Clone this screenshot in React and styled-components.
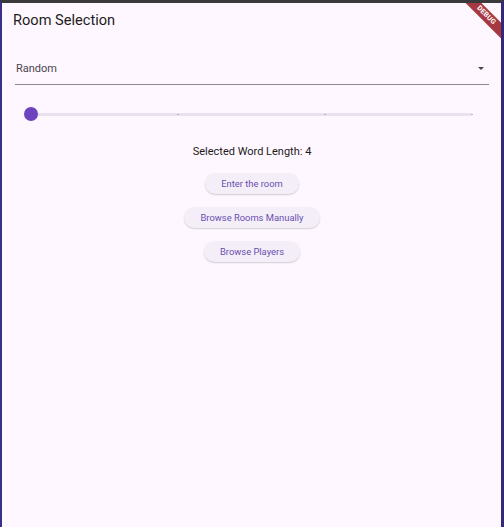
import styled, { createGlobalStyle } from "styled-components";

const GlobalStyle = createGlobalStyle`
  html, body {
    margin: 0;
    padding: 0;
    background: #fef7ff;
  }
  * { box-sizing: border-box; }
`;

const Frame = styled.div`
  position: relative;
  width: 504px;
  height: 527px;
  overflow: hidden;
  background: #fef7ff;
  border-top: 3px solid #3a3a3c;
  border-left: 2px solid #3a2f86;
  border-right: 3px solid #33287a;
  font-family: Roboto, "Liberation Sans", sans-serif;
  display: flex;
  flex-direction: column;
`;

const AppBar = styled.header`
  height: 45px;
  padding: 8px 11px 0;
  font-size: 14.6px;
  color: #1d1b20;
  line-height: 18px;
`;

const Body = styled.main`
  padding: 0 12px 0 13px;
  display: flex;
  flex-direction: column;
  align-items: stretch;
`;

const Dropdown = styled.div`
  height: 37px;
  display: flex;
  align-items: center;
  justify-content: space-between;
  border-bottom: 1px solid #8e8a93;
  padding: 4px 5px 0 1px;
  font-size: 11px;
  color: #49454f;
`;

const Caret = styled.span`
  width: 0;
  height: 0;
  border-left: 3.5px solid transparent;
  border-right: 3.5px solid transparent;
  border-top: 3.5px solid #49454f;
  margin-top: 0;
`;

const SliderRow = styled.div`
  position: relative;
  height: 30px;
  margin: 14px 17px 0 16px;
  display: flex;
  align-items: center;
`;

const Track = styled.div`
  position: relative;
  flex: 1;
  height: 3px;
  border-radius: 2px;
  background: #e9e1ef;
`;

const Tick = styled.span`
  position: absolute;
  top: 1px;
  width: 2px;
  height: 1px;
  margin-left: -1px;
  background: #b6afc0;
`;

const Thumb = styled.span`
  position: absolute;
  left: -7px;
  top: -6px;
  width: 14px;
  height: 14px;
  border-radius: 50%;
  background: #6f43c0;
`;

const Label = styled.div`
  margin-top: 16px;
  text-align: center;
  font-size: 11px;
  color: #1d1b20;
  line-height: 13px;
`;

const Actions = styled.div`
  margin-top: 15px;
  display: flex;
  flex-direction: column;
  align-items: center;
  gap: 13px;
`;

const Pill = styled.button`
  height: 21px;
  padding: 0 16px;
  border: none;
  border-radius: 11px;
  background: #f4eef8;
  color: #6a4fb0;
  font-family: Roboto, "Liberation Sans", sans-serif;
  font-size: 9.4px;
  box-shadow: 0 1px 1.5px rgba(0, 0, 0, 0.18);
  cursor: pointer;
`;

const Banner = styled.div`
  position: absolute;
  top: 7px;
  right: -24px;
  width: 78px;
  height: 11px;
  transform: rotate(45deg);
  background: #a8383f;
  color: #fff;
  font-size: 7px;
  font-weight: 700;
  line-height: 11px;
  text-align: center;
  letter-spacing: 0.2px;
  box-shadow: 0 0 1px rgba(0, 0, 0, 0.3);
`;

const ticks = [0, 1 / 3, 2 / 3, 1];

export default function App() {
  return (
    <>
      <GlobalStyle />
      <Frame>
        <AppBar>Room Selection</AppBar>
        <Body>
          <Dropdown>
            <span>Random</span>
            <Caret />
          </Dropdown>
          <SliderRow>
            <Track>
              {ticks.map((t) => (
                <Tick key={t} style={{ left: `${t * 100}%` }} />
              ))}
              <Thumb />
            </Track>
          </SliderRow>
          <Label>Selected Word Length: 4</Label>
          <Actions>
            <Pill>Enter the room</Pill>
            <Pill>Browse Rooms Manually</Pill>
            <Pill>Browse Players</Pill>
          </Actions>
        </Body>
        <Banner>DEBUG</Banner>
      </Frame>
    </>
  );
}
